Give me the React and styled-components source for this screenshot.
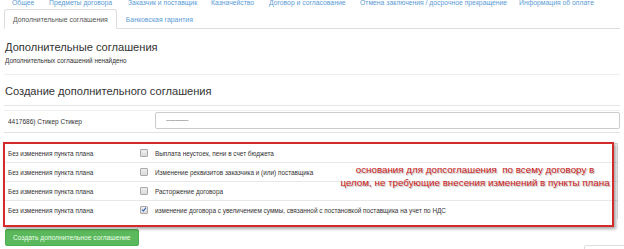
import React from "react";
import styled, { createGlobalStyle } from "styled-components";

const Global = createGlobalStyle`
  html, body { margin: 0; padding: 0; background: #fff; }
  body { font-family: "Liberation Sans", Arial, sans-serif; color: #333; overflow: hidden; }
`;

const Page = styled.div`
  position: relative;
  width: 624px;
  height: 249px;
  overflow: hidden;
`;

const NavRow = styled.div`
  display: flex;
  height: 8px;
  margin-top: -2px;
  padding-left: 12px;
  font-size: 6.8px;
  line-height: 9px;
`;

const NavLink = styled.a`
  flex: 0 0 ${(p) => p.$w}px;
  color: #5b9bd5;
  white-space: nowrap;
  text-decoration: none;
`;

const Tabs = styled.div`
  display: flex;
  margin: 3px 4px 0 4px;
  border-bottom: 1px solid #ddd;
  height: 19px;
`;

const Tab = styled.div`
  box-sizing: border-box;
  height: ${(p) => (p.$active ? "20px" : "19px")};
  padding: 0 8px;
  font-size: 6.9px;
  line-height: 19px;
  white-space: nowrap;
  color: ${(p) => (p.$active ? "#555" : "#5b9bd5")};
  border: 1px solid ${(p) => (p.$active ? "#ddd" : "transparent")};
  border-bottom-color: ${(p) => (p.$active ? "#fff" : "transparent")};
  border-radius: 3px 3px 0 0;
  background: #fff;
`;

const H3 = styled.h3`
  margin: 11px 0 0 5px;
  font-size: 11.1px;
  font-weight: normal;
  line-height: 14px;
  color: #333;
`;

const Note = styled.div`
  margin: 3px 0 0 5px;
  font-size: 6.4px;
  line-height: 8px;
  color: #333;
`;

const Hr = styled.div`
  margin: 9px 4px 0 4px;
  border-top: 1px solid #eee;
`;

const H2 = styled.h2`
  margin: 9px 4px 0 4px;
  padding: 0 0 6px 1px;
  font-size: 11.1px;
  font-weight: normal;
  line-height: 15px;
  color: #333;
  border-bottom: 1px solid #e6e6e6;
`;

const FormRow = styled.div`
  display: grid;
  grid-template-columns: 151px 1fr;
  align-items: start;
  margin: 4px 4px 0 4px;
  padding: 1px 0 3px 0;
  border-top: 1px solid #eee;
  border-bottom: 1px solid #e3e3e3;
`;

const FormLabel = styled.div`
  padding: 5px 0 0 4px;
  font-size: 6.5px;
  line-height: 9px;
  color: #333;
`;

const Select = styled.div`
  box-sizing: border-box;
  height: 17px;
  border: 1px solid #ccc;
  border-radius: 2px;
  padding-left: 10px;
  font-size: 7px;
  line-height: 14px;
  color: #777;
  letter-spacing: -0.5px;
`;

const Table = styled.div`
  margin: 10px 6px 0 4px;
  border-top: 1px solid #ddd;
  border-right: 1px solid #ddd;
`;

const Row = styled.div`
  display: grid;
  grid-template-columns: 136px 15px 1fr;
  align-items: center;
  height: 18px;
  border-bottom: 1px solid #e8e8e8;
  font-size: 6.4px;
  color: #333;
  &:last-child { border-bottom: none; }
`;

const Cell = styled.div`
  padding-left: ${(p) => p.$pad || 0}px;
  white-space: nowrap;
`;

const Check = styled.span`
  box-sizing: border-box;
  display: inline-flex;
  align-items: center;
  justify-content: center;
  width: 8px;
  height: 8px;
  border: 1px solid #aaa;
  background: linear-gradient(#eee, #d9d9d9);
  border-radius: 1px;
`;

const Button = styled.button`
  display: block;
  box-sizing: border-box;
  margin: 10px 0 0 5px;
  height: 17px;
  padding: 0 7px;
  border: 1px solid #4cae4c;
  border-radius: 2px;
  background: #5cb85c;
  color: #eaffea;
  font-family: "Liberation Sans", Arial, sans-serif;
  font-size: 6.7px;
  line-height: 15px;
`;

const RedBox = styled.div`
  position: absolute;
  left: 3px;
  top: 142px;
  width: 607px;
  height: 81px;
  border: 2px solid #d42a2a;
  box-shadow: 2px 2px 3px rgba(0, 0, 0, 0.35);
  pointer-events: none;
`;

const Annotation = styled.div`
  position: absolute;
  left: 328px;
  top: 163px;
  width: 294px;
  text-align: center;
  font-size: 9.8px;
  line-height: 13px;
  color: #cc1a1a;
  text-shadow: 1px 1px 1px rgba(0, 0, 0, 0.3);
  white-space: pre;
`;

const Corner = styled.div`
  position: absolute;
  left: 584px;
  top: 245px;
  width: 60px;
  height: 20px;
  border: 1px solid #ddd;
  border-radius: 2px;
`;

const CheckMark = () => (
  <svg width="7" height="7" viewBox="0 0 8 8">
    <path d="M1.5 4.2 L3.2 6 L6.6 1.5" fill="none" stroke="#2a5db0" strokeWidth="1.4" />
  </svg>
);

const nav = [
  ["Общее", 37],
  ["Предметы договора", 79],
  ["Заказчик и поставщик", 83],
  ["Казначейство", 58],
  ["Договор и согласование", 91],
  ["Отмена заключения / досрочное прекращение", 159],
  ["Информация об оплате", 90],
];

const rows = [
  ["Выплата неустоек, пени в счет бюджета", false],
  ["Изменение реквизитов заказчика и (или) поставщика", false],
  ["Расторжение договора", false],
  ["изменение договора с увеличением суммы, связанной с постановкой поставщика на учет по НДС", true],
];

export default function App() {
  return (
    <Page>
      <Global />
      <NavRow>
        {nav.map(([n, w]) => (
          <NavLink key={n} $w={w}>{n}</NavLink>
        ))}
      </NavRow>
      <Tabs>
        <Tab $active>Дополнительные соглашения</Tab>
        <Tab>Банковская гарантия</Tab>
      </Tabs>
      <H3>Дополнительные соглашения</H3>
      <Note>Дополнительных соглашений ненайдено</Note>
      <Hr />
      <H2>Создание дополнительного соглашения</H2>
      <FormRow>
        <FormLabel>4417686) Стикер Стикер</FormLabel>
        <Select>------------</Select>
      </FormRow>
      <Table>
        {rows.map(([label, checked]) => (
          <Row key={label}>
            <Cell $pad={4}>Без изменения пункта плана</Cell>
            <Cell>
              <Check>{checked && <CheckMark />}</Check>
            </Cell>
            <Cell>{label}</Cell>
          </Row>
        ))}
      </Table>
      <Button>Создать дополнительное соглашение</Button>
      <RedBox />
      <Annotation>{"основания для допсоглашения  по всему договору в\nцелом, не требующие внесения изменений в пункты плана"}</Annotation>
      <Corner />
    </Page>
  );
}
